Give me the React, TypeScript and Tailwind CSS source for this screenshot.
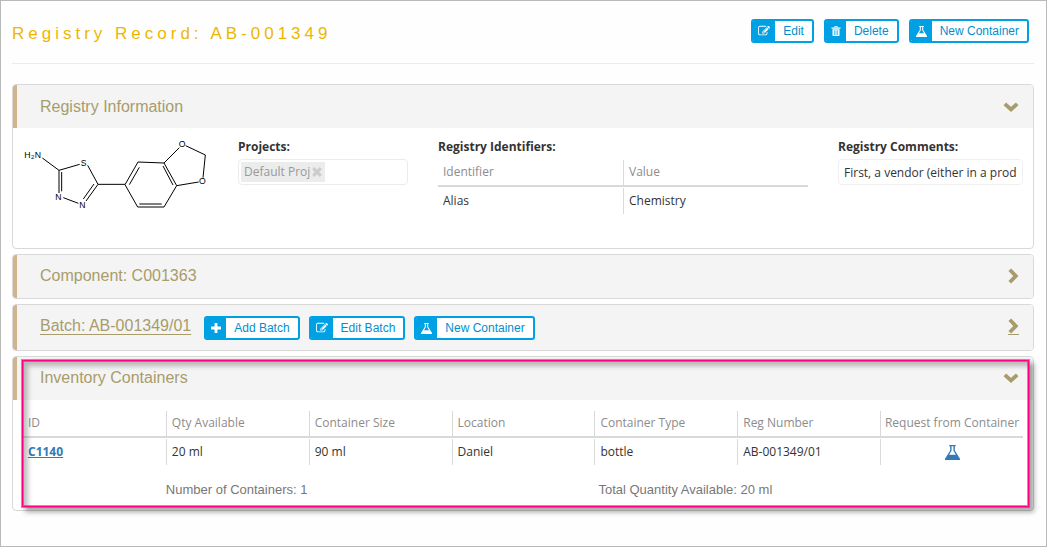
import React from "react";

type IconProps = { className?: string };

const EditIcon = ({ className }: IconProps) => (
  <svg viewBox="0 0 1792 1792" className={className} fill="currentColor" aria-hidden="true">
    <path d="M888 1184l116-116-152-152-116 116v56h96v96h56zm440-720q-16-16-33 1l-350 350q-17 17-1 33t33-1l350-350q17-17 1-33zm80 594v190q0 119-84.500 203.500t-203.500 84.500h-832q-119 0-203.500-84.500t-84.500-203.500v-832q0-119 84.500-203.500t203.500-84.500h832q63 0 117 25 15 7 18 23 3 17-9 29l-49 49q-14 14-32 8-23-6-45-6h-832q-66 0-113 47t-47 113v832q0 66 47 113t113 47h832q66 0 113-47t47-113v-126q0-13 9-22l64-64q15-15 35-7t20 29zm-96-738l288 288-672 672h-288v-288zm444 132l-92 92-288-288 92-92q28-28 68-28t68 28l152 152q28 28 28 68t-28 68z" />
  </svg>
);

const TrashIcon = ({ className }: IconProps) => (
  <svg viewBox="0 0 12 12" className={className} aria-hidden="true">
    <path d="M4.200 1.800V0.900h3.600v0.900" fill="none" stroke="currentColor" strokeWidth="1.200" />
    <path d="M0.600 1.800h10.800v1.600H0.600z" fill="currentColor" />
    <path
      fillRule="evenodd"
      fill="currentColor"
      d="M1.800 3.900h8.400V11a1 1 0 0 1-1 1H2.800a1 1 0 0 1-1-1zM3.500 5.200v5.500h0.800V5.200zM5.600 5.200v5.500h0.800V5.200zM7.700 5.200v5.500h0.800V5.200z"
    />
  </svg>
);

const FlaskIcon = ({ className }: IconProps) => (
  <svg viewBox="0 0 16 16" className={className} aria-hidden="true">
    <path
      fillRule="evenodd"
      fill="currentColor"
      d="M4.600 0h6.800v1.400h-0.900v4.400L16 14.600V16H0v-1.400L5.500 5.800V1.400h-0.900zM7 1.400v4.800L4.300 10.400h7.400L9 6.200V1.400z"
    />
  </svg>
);

const PlusIcon = ({ className }: IconProps) => (
  <svg viewBox="0 0 10 10" className={className} aria-hidden="true">
    <path d="M5 0v10M0 5h10" stroke="currentColor" strokeWidth="2.800" />
  </svg>
);

const ChevronDown = () => (
  <svg viewBox="0 0 16 10" className="h-[10px] w-4" aria-hidden="true">
    <path d="M1.800 1.800L8 7.400l6.200-5.600" fill="none" stroke="#a89c6c" strokeWidth="3.800" />
  </svg>
);

const ChevronRight = () => (
  <svg viewBox="0 0 11 16" className="h-4 w-[11px]" aria-hidden="true">
    <path d="M1.800 1.800L7.800 8L1.800 14.200" fill="none" stroke="#a89c6c" strokeWidth="3.800" />
  </svg>
);

function ActionButton({ icon, children }: { icon: React.ReactNode; children: React.ReactNode }) {
  return (
    <button
      type="button"
      className="flex h-6 items-stretch overflow-hidden rounded-[3px] border-2 border-[#00a1e4] bg-white text-xs text-[#008fd0]"
    >
      <span className="flex items-center bg-[#00a1e4] px-[5px] text-white">{icon}</span>
      <span className="flex items-center px-2">{children}</span>
    </button>
  );
}

function PanelHeader({
  title,
  open,
  link,
  className,
  children,
}: {
  title: string;
  open?: boolean;
  link?: boolean;
  className: string;
  children?: React.ReactNode;
}) {
  return (
    <div className={`flex border-l-4 border-[#d2b48c] bg-[#f4f4f4] pr-[14px] pl-[23px] font-['Liberation_Sans',Arial,sans-serif] ${className}`}>
      <h2 className="text-base leading-5 text-[#a89c6c]">
        {link ? (
          <a href="#batch" className="underline underline-offset-3">
            {title}
          </a>
        ) : (
          title
        )}
      </h2>
      {children}
      <button type="button" aria-label={`Toggle ${title}`} className="ml-auto flex h-5 items-center">
        {open ? (
          <ChevronDown />
        ) : (
          <span className={link ? "border-b border-[#a89c6c]" : ""}>
            <ChevronRight />
          </span>
        )}
      </button>
    </div>
  );
}

const panel = "overflow-hidden rounded border border-[#d9d9d9] bg-white";
const th = "h-[27px] border-b-2 border-[#d9d9d9] p-0 text-left font-normal text-[#8c8c8c]";
const cell = "flex items-center";
const divided = "border-l border-[#d9d9d9]";

type CellProps = { children: React.ReactNode; first?: boolean; center?: boolean };

function HeadCell({ children, first, center }: CellProps) {
  return (
    <th scope="col" className={th}>
      <div className={`h-[25px] ${cell} ${center ? "justify-center whitespace-nowrap" : "pl-[5px]"} ${first ? "" : divided}`}>
        {children}
      </div>
    </th>
  );
}

function BodyCell({ children, first, center }: CellProps) {
  return (
    <td className="p-0 pt-px">
      <div className={`h-[26px] ${cell} ${center ? "justify-center" : "pl-[5px]"} ${first ? "" : divided}`}>{children}</div>
    </td>
  );
}

function Molecule() {
  return (
    <svg viewBox="0 0 660 330" className="h-[110px] w-[220px] shrink-0" role="img" aria-label="Chemical structure">
      <g fill="none" stroke="#000" strokeWidth="3">
        <path d="M97 99L147 136L209 118M147 136V204M155 141V199M160 218L205 235M233 121L264 178M228 228L264 178M220 222L252 177M264 178H345" />
        <path d="M345 179L384 111L462 114L500 182L462 246H383ZM358 179L388 127M459 123L489 180M388 237H455" />
        <path d="M462 114L508 68M527 62L586 90L579 158M500 182L566 171" />
      </g>
      <g className="font-['Liberation_Sans',Arial,sans-serif]" fontSize="26" fill="#000" textAnchor="middle">
        <text x="52" y="99">H</text>
        <text x="68" y="103" fontSize="18">2</text>
        <text x="84" y="99">N</text>
        <text x="221" y="123">S</text>
        <text x="145" y="225">N</text>
        <text x="217" y="250">N</text>
        <text x="516" y="67">O</text>
        <text x="577" y="177">O</text>
      </g>
    </svg>
  );
}

export default function App() {
  return (
    <main className="min-h-screen border border-[#b9b9b9] bg-[#fefefe] pr-3 pl-[11px] font-['Open_Sans','Noto_Sans',sans-serif] text-xs text-[#333]">
      <header className="flex h-[63px] items-start justify-between border-b border-[#ebebeb] pt-[18px] pr-[5px] font-['Liberation_Sans',Arial,sans-serif]">
        <h1 className="pt-[3px] text-[17px] leading-6 tracking-[4px] text-[#edb700]">Registry Record: AB-001349</h1>
        <div className="flex gap-[10px]">
          <ActionButton icon={<EditIcon className="h-3 w-3" />}>Edit</ActionButton>
          <ActionButton icon={<TrashIcon className="h-[10px] w-[10px]" />}>Delete</ActionButton>
          <ActionButton icon={<FlaskIcon className="h-[11px] w-[11px]" />}>New Container</ActionButton>
        </div>
      </header>

      <div className="flex flex-col gap-[5px] pt-5">
        <section className={panel}>
          <PanelHeader title="Registry Information" open className="h-[43px] pt-3" />
          <div className="grid min-h-[120px] grid-cols-5 px-[10px] pt-[10px]">
            <div className="-mt-[13px] -ml-[13px]">
              <Molecule />
            </div>
            <div className="px-[15px]">
              <h3 className="h-[21px] leading-[18px] font-bold">Projects:</h3>
              <div className="flex h-[26px] items-center rounded border border-[#ececec] px-0.5">
                <span className="flex h-5 items-center gap-0.5 bg-[#ececec] px-[3px] text-[#999]">
                  Default Proj
                  <svg viewBox="0 0 10 10" className="h-[10px] w-[10px]" aria-hidden="true">
                    <path d="M1.200 1.200l7.600 7.600M8.800 1.200l-7.600 7.600" stroke="#ccc" strokeWidth="3.200" />
                  </svg>
                </span>
              </div>
            </div>
            <div className="col-span-2 px-[15px]">
              <h3 className="h-[21px] leading-[18px] font-bold">Registry Identifiers:</h3>
              <table className="w-full table-fixed">
                <thead>
                  <tr>
                    <HeadCell first>Identifier</HeadCell>
                    <HeadCell>Value</HeadCell>
                  </tr>
                </thead>
                <tbody>
                  <tr>
                    <BodyCell first>Alias</BodyCell>
                    <BodyCell>Chemistry</BodyCell>
                  </tr>
                </tbody>
              </table>
            </div>
            <div className="pl-[15px]">
              <label htmlFor="comments" className="block h-[21px] leading-[18px] font-bold">
                Registry Comments:
              </label>
              <input
                id="comments"
                type="text"
                readOnly
                defaultValue="First, a vendor (either in a product catalog)"
                className="h-[26px] w-full rounded border border-[#f0f0f0] bg-white px-[5px]"
              />
            </div>
          </div>
        </section>

        <section className={panel}>
          <PanelHeader title="Component: C001363" className="h-[43px] pt-[11px]" />
        </section>

        <section className={panel}>
          <PanelHeader title="Batch: AB-001349/01" link className="h-[45px] pt-[11px]">
            <div className="flex gap-[9px] pl-[13px]">
              <ActionButton icon={<PlusIcon className="h-[10px] w-[10px]" />}>Add Batch</ActionButton>
              <ActionButton icon={<EditIcon className="h-3 w-3" />}>Edit Batch</ActionButton>
              <ActionButton icon={<FlaskIcon className="h-[11px] w-[11px]" />}>New Container</ActionButton>
            </div>
          </PanelHeader>
        </section>

        <section className="relative">
          <div className={panel}>
            <PanelHeader title="Inventory Containers" open className="h-[43px] pt-[11px]" />
            <div className="px-[10px] pt-[10px] pb-[10px]">
              <table className="w-full table-fixed">
                <thead>
                  <tr>
                    <HeadCell first>ID</HeadCell>
                    <HeadCell>Qty Available</HeadCell>
                    <HeadCell>Container Size</HeadCell>
                    <HeadCell>Location</HeadCell>
                    <HeadCell>Container Type</HeadCell>
                    <HeadCell>Reg Number</HeadCell>
                    <HeadCell center>Request from Container</HeadCell>
                  </tr>
                </thead>
                <tbody>
                  <tr>
                    <BodyCell first>
                      <a href="#c1140" className="font-bold text-[#337ab7] underline">C1140</a>
                    </BodyCell>
                    <BodyCell>20 ml</BodyCell>
                    <BodyCell>90 ml</BodyCell>
                    <BodyCell>Daniel</BodyCell>
                    <BodyCell>bottle</BodyCell>
                    <BodyCell>AB-001349/01</BodyCell>
                    <BodyCell center>
                      <button type="button" aria-label="Request from container" className="text-[#337ab7]">
                        <FlaskIcon className="h-[15px] w-[15px]" />
                      </button>
                    </BodyCell>
                  </tr>
                </tbody>
              </table>
              <div className="grid grid-cols-7 pt-[15px] font-['Liberation_Sans',Arial,sans-serif] text-[13px] leading-5 text-[#777]">
                <p className="col-span-3 col-start-2">Number of Containers: 1</p>
                <p className="col-span-3 pl-1">Total Quantity Available: 20 ml</p>
              </div>
            </div>
          </div>
          <div className="pointer-events-none absolute top-1 right-[5px] bottom-1 left-[10px] border border-[#ff0080] shadow-[0_0_0_1px_rgba(255,0,128,0.55),inset_0_0_0_1px_rgba(255,0,128,0.55),4px_4px_5px_1px_rgba(0,0,0,0.35),inset_5px_5px_5px_rgba(0,0,0,0.25)]" />
        </section>
      </div>
    </main>
  );
}
